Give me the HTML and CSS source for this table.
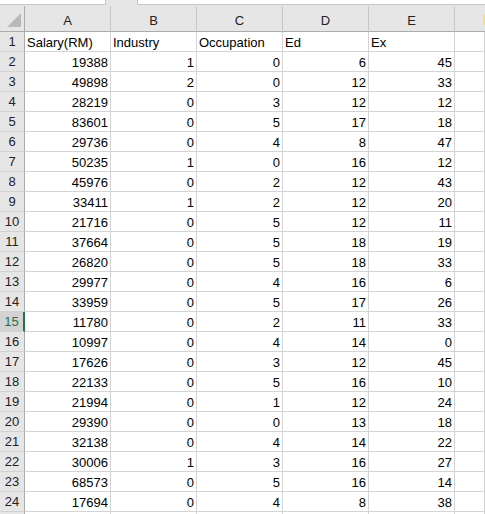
FILE: index.html
```html
<!DOCTYPE html>
<html>
<head>
<meta charset="utf-8">
<link rel="stylesheet" href="styles.css">
</head>
<body>
<div class="sheet">
  <div class="topbar">
    <div class="namebox"></div>
    <div class="gap"></div>
    <div class="formula"></div>
  </div>
  <div class="row colhead">
    <div class="corner"><span class="tri"></span></div>
    <div class="ch">A</div><div class="ch">B</div><div class="ch">C</div><div class="ch">D</div><div class="ch">E</div><div class="ch last"><span class="mark"></span></div>
  </div>
  <div class="row"><div class="rh">1</div><div class="c t">Salary(RM)</div><div class="c t">Industry</div><div class="c t">Occupation</div><div class="c t">Ed</div><div class="c t">Ex</div><div class="c"></div></div>
  <div class="row"><div class="rh">2</div><div class="c">19388</div><div class="c">1</div><div class="c">0</div><div class="c">6</div><div class="c">45</div><div class="c"></div></div>
  <div class="row"><div class="rh">3</div><div class="c">49898</div><div class="c">2</div><div class="c">0</div><div class="c">12</div><div class="c">33</div><div class="c"></div></div>
  <div class="row"><div class="rh">4</div><div class="c">28219</div><div class="c">0</div><div class="c">3</div><div class="c">12</div><div class="c">12</div><div class="c"></div></div>
  <div class="row"><div class="rh">5</div><div class="c">83601</div><div class="c">0</div><div class="c">5</div><div class="c">17</div><div class="c">18</div><div class="c"></div></div>
  <div class="row"><div class="rh">6</div><div class="c">29736</div><div class="c">0</div><div class="c">4</div><div class="c">8</div><div class="c">47</div><div class="c"></div></div>
  <div class="row"><div class="rh">7</div><div class="c">50235</div><div class="c">1</div><div class="c">0</div><div class="c">16</div><div class="c">12</div><div class="c"></div></div>
  <div class="row"><div class="rh">8</div><div class="c">45976</div><div class="c">0</div><div class="c">2</div><div class="c">12</div><div class="c">43</div><div class="c"></div></div>
  <div class="row"><div class="rh">9</div><div class="c">33411</div><div class="c">1</div><div class="c">2</div><div class="c">12</div><div class="c">20</div><div class="c"></div></div>
  <div class="row"><div class="rh">10</div><div class="c">21716</div><div class="c">0</div><div class="c">5</div><div class="c">12</div><div class="c">11</div><div class="c"></div></div>
  <div class="row"><div class="rh">11</div><div class="c">37664</div><div class="c">0</div><div class="c">5</div><div class="c">18</div><div class="c">19</div><div class="c"></div></div>
  <div class="row"><div class="rh">12</div><div class="c">26820</div><div class="c">0</div><div class="c">5</div><div class="c">18</div><div class="c">33</div><div class="c"></div></div>
  <div class="row"><div class="rh">13</div><div class="c">29977</div><div class="c">0</div><div class="c">4</div><div class="c">16</div><div class="c">6</div><div class="c"></div></div>
  <div class="row"><div class="rh">14</div><div class="c">33959</div><div class="c">0</div><div class="c">5</div><div class="c">17</div><div class="c">26</div><div class="c"></div></div>
  <div class="row"><div class="rh sel">15</div><div class="c">11780</div><div class="c">0</div><div class="c">2</div><div class="c">11</div><div class="c">33</div><div class="c"></div></div>
  <div class="row"><div class="rh">16</div><div class="c">10997</div><div class="c">0</div><div class="c">4</div><div class="c">14</div><div class="c">0</div><div class="c"></div></div>
  <div class="row"><div class="rh">17</div><div class="c">17626</div><div class="c">0</div><div class="c">3</div><div class="c">12</div><div class="c">45</div><div class="c"></div></div>
  <div class="row"><div class="rh">18</div><div class="c">22133</div><div class="c">0</div><div class="c">5</div><div class="c">16</div><div class="c">10</div><div class="c"></div></div>
  <div class="row"><div class="rh">19</div><div class="c">21994</div><div class="c">0</div><div class="c">1</div><div class="c">12</div><div class="c">24</div><div class="c"></div></div>
  <div class="row"><div class="rh">20</div><div class="c">29390</div><div class="c">0</div><div class="c">0</div><div class="c">13</div><div class="c">18</div><div class="c"></div></div>
  <div class="row"><div class="rh">21</div><div class="c">32138</div><div class="c">0</div><div class="c">4</div><div class="c">14</div><div class="c">22</div><div class="c"></div></div>
  <div class="row"><div class="rh">22</div><div class="c">30006</div><div class="c">1</div><div class="c">3</div><div class="c">16</div><div class="c">27</div><div class="c"></div></div>
  <div class="row"><div class="rh">23</div><div class="c">68573</div><div class="c">0</div><div class="c">5</div><div class="c">16</div><div class="c">14</div><div class="c"></div></div>
  <div class="row"><div class="rh">24</div><div class="c">17694</div><div class="c">0</div><div class="c">4</div><div class="c">8</div><div class="c">38</div><div class="c"></div></div>
  <div class="row"><div class="rh"></div><div class="c"></div><div class="c"></div><div class="c"></div><div class="c"></div><div class="c"></div><div class="c"></div></div>
</div>
</body>
</html>
```
FILE: styles.css
```css
* { box-sizing: border-box; }
html, body { margin: 0; padding: 0; background: #ffffff; }
body {
  width: 485px;
  height: 514px;
  overflow: hidden;
  font-family: "Liberation Sans", Arial, sans-serif;
  font-size: 13px;
  color: #000;
}
.sheet { width: 485px; }
.topbar {
  display: flex;
  height: 6px;
  background: #e6e6e6;
}
.namebox {
  width: 106px;
  height: 5px;
  background: #fff;
  border-right: 1px solid #c6c6c6;
  border-bottom: 1px solid #c6c6c6;
}
.gap { width: 31px; }
.formula {
  flex: 1;
  height: 5px;
  background: #fff;
  border-left: 1px solid #c6c6c6;
  border-bottom: 1px solid #c6c6c6;
}
.row {
  display: grid;
  grid-template-columns: 25px 86px 86px 86px 86px 86px 1fr;
  height: 20px;
}
.colhead { height: 26px; background: #e6e6e6; }
.corner {
  position: relative;
  border-right: 1px solid #ababab;
  border-bottom: 1px solid #ababab;
}
.tri {
  position: absolute;
  right: 3px;
  bottom: 4px;
  width: 0;
  height: 0;
  border-left: 14px solid transparent;
  border-bottom: 14px solid #b9b9b9;
}
.ch {
  display: flex;
  align-items: center;
  justify-content: center;
  padding-top: 3px;
  border-right: 1px solid #c8c8c8;
  border-bottom: 1px solid #ababab;
  color: #222;
}
.ch.last { border-right: none; position: relative; }
.mark {
  position: absolute;
  right: 0;
  top: 8px;
  width: 2px;
  height: 12px;
  background: #f4e27a;
}
.rh {
  display: flex;
  align-items: center;
  justify-content: center;
  background: #e6e6e6;
  border-right: 1px solid #ababab;
  border-bottom: 1px solid #d2d2d2;
  color: #222;
}
.rh.sel {
  background: #d3d3d3;
  color: #217346;
  border-right: 2px solid #217346;
}
.c {
  display: flex;
  align-items: center;
  justify-content: flex-end;
  padding: 1px 2px 0 2px;
  border-right: 1px solid #d4d4d4;
  border-bottom: 1px solid #d4d4d4;
  white-space: nowrap;
  overflow: hidden;
}
.c.t { justify-content: flex-start; }
```
